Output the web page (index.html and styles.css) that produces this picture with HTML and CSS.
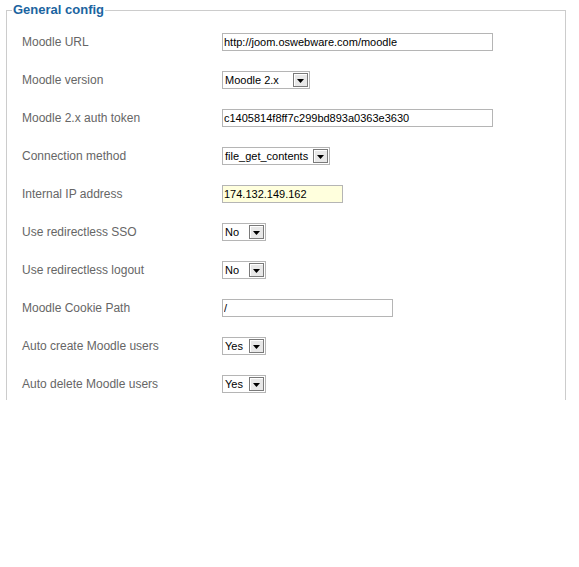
FILE: index.html
```html
<!DOCTYPE html>
<html lang="en">
<head>
    <meta charset="UTF-8">
    <title>General config</title>
    <link rel="stylesheet" href="styles.css">
</head>
<body>

    <fieldset class="config">
        <legend>General config</legend>

        <div class="row">
            <label for="moodleUrl">Moodle URL</label>
            <input type="text" id="moodleUrl" class="field wide" value="http://joom.oswebware.com/moodle">
        </div>

        <div class="row">
            <label>Moodle version</label>
            <div class="dropdown w-version">
                <span class="value">Moodle 2.x</span>
                <span class="arrow"><svg width="7" height="4" viewBox="0 0 7 4"><path d="M0 0h7L3.5 4z" fill="#000"/></svg></span>
            </div>
        </div>

        <div class="row">
            <label for="authToken">Moodle 2.x auth token</label>
            <input type="text" id="authToken" class="field wide" value="c1405814f8ff7c299bd893a0363e3630">
        </div>

        <div class="row">
            <label>Connection method</label>
            <div class="dropdown w-method">
                <span class="value">file_get_contents</span>
                <span class="arrow"><svg width="7" height="4" viewBox="0 0 7 4"><path d="M0 0h7L3.5 4z" fill="#000"/></svg></span>
            </div>
        </div>

        <div class="row">
            <label for="ipAddress">Internal IP address</label>
            <input type="text" id="ipAddress" class="field ip" value="174.132.149.162">
        </div>

        <div class="row">
            <label>Use redirectless SSO</label>
            <div class="dropdown w-small">
                <span class="value">No</span>
                <span class="arrow"><svg width="7" height="4" viewBox="0 0 7 4"><path d="M0 0h7L3.5 4z" fill="#000"/></svg></span>
            </div>
        </div>

        <div class="row">
            <label>Use redirectless logout</label>
            <div class="dropdown w-small">
                <span class="value">No</span>
                <span class="arrow"><svg width="7" height="4" viewBox="0 0 7 4"><path d="M0 0h7L3.5 4z" fill="#000"/></svg></span>
            </div>
        </div>

        <div class="row">
            <label for="cookiePath">Moodle Cookie Path</label>
            <input type="text" id="cookiePath" class="field medium" value="/">
        </div>

        <div class="row">
            <label>Auto create Moodle users</label>
            <div class="dropdown w-small">
                <span class="value">Yes</span>
                <span class="arrow"><svg width="7" height="4" viewBox="0 0 7 4"><path d="M0 0h7L3.5 4z" fill="#000"/></svg></span>
            </div>
        </div>

        <div class="row">
            <label>Auto delete Moodle users</label>
            <div class="dropdown w-small">
                <span class="value">Yes</span>
                <span class="arrow"><svg width="7" height="4" viewBox="0 0 7 4"><path d="M0 0h7L3.5 4z" fill="#000"/></svg></span>
            </div>
        </div>
    </fieldset>

</body>
</html>
```

FILE: styles.css
```css
/* General Styles */
body {
    font-family: "Liberation Sans", Arial, sans-serif;
    background: #fff;
    margin: 0;
    padding: 0;
}

/* Config box, open at the bottom */
.config {
    margin: 2px 0 0 6px;
    width: 560px;
    height: 398px;
    box-sizing: border-box;
    border: 1px solid #cccccc;
    border-bottom: none;
    padding: 0 0 0 15px;
}

.config legend {
    color: #1b64a0;
    font-size: 13px;
    font-weight: bold;
    padding: 0 1px;
    margin-left: -10px;
    line-height: 16px;
}

.row {
    display: grid;
    grid-template-columns: 200px auto;
    align-items: center;
    justify-items: start;
    height: 38px;
}

.row:first-of-type {
    margin-top: 5px;
}

label {
    font-size: 12px;
    color: #666;
}

/* Text inputs */
.field {
    box-sizing: border-box;
    height: 18px;
    border: 1px solid #b5b5b5;
    padding: 0 1px;
    font-family: "Liberation Sans", Arial, sans-serif;
    font-size: 11px;
    color: #000;
    background: #fff;
}

.wide {
    width: 271px;
}

.medium {
    width: 171px;
}

.ip {
    width: 121px;
    background: #ffffdd;
}

/* Old style drop-down boxes */
.dropdown {
    box-sizing: border-box;
    height: 18px;
    display: flex;
    align-items: center;
    justify-content: space-between;
    border: 1px solid #b5b5b5;
    background: #fff;
    padding: 0 1px 0 2px;
    font-size: 11px;
    color: #000;
}

.w-version {
    width: 88px;
}

.w-method {
    width: 108px;
}

.w-small {
    width: 44px;
}

.dropdown .arrow {
    box-sizing: border-box;
    width: 15px;
    height: 14px;
    display: flex;
    align-items: flex-end;
    justify-content: center;
    padding-bottom: 3px;
    background: #e8e8e8;
    border: 1px solid #7a7a7a;
    box-shadow: inset 1px 1px 0 #fff;
}

.dropdown .arrow svg {
    display: block;
}
```
